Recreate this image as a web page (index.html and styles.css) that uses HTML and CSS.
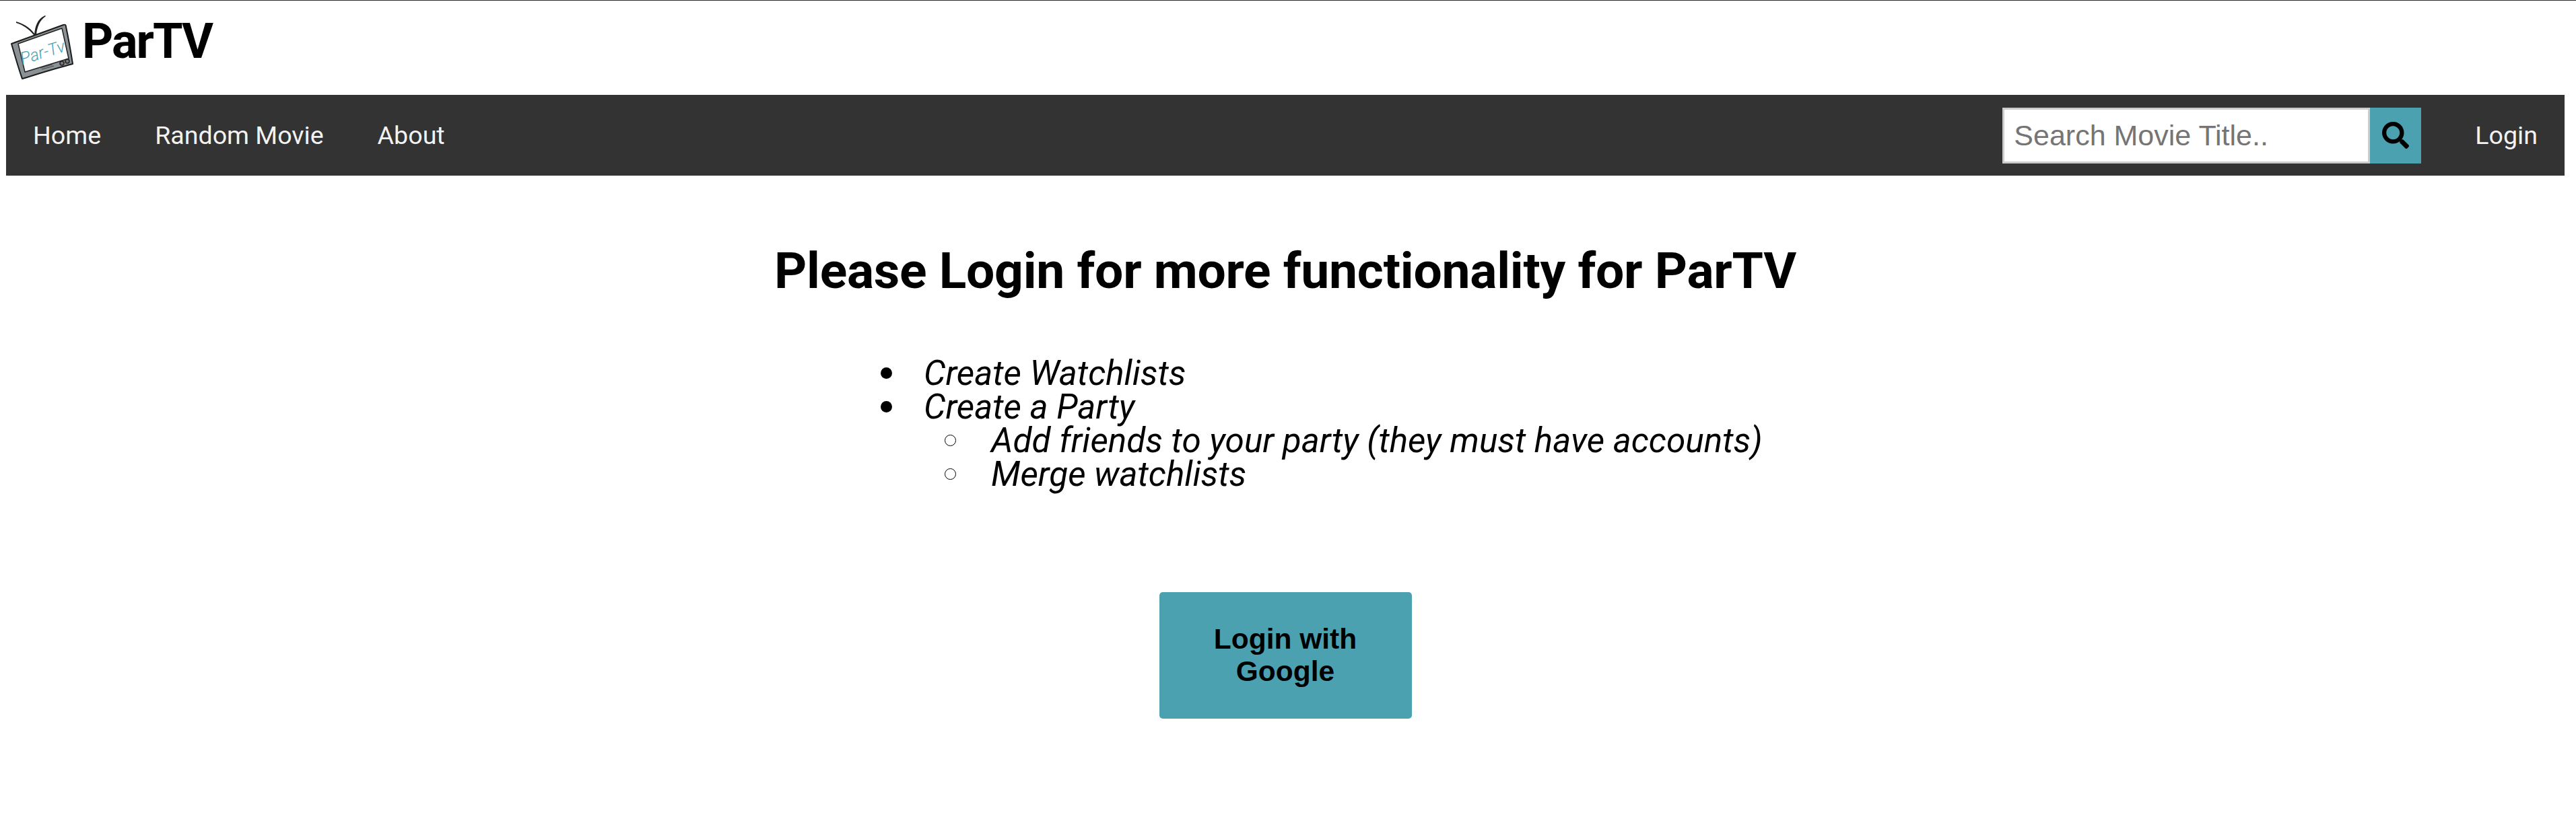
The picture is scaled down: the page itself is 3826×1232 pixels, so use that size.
FILE: index.html
```html
<!DOCTYPE html>
<html lang="en">
<head>
    <meta charset="UTF-8">
    <meta name="viewport" content="width=device-width, initial-scale=1.0">
    <title>ParTV</title>
    <link rel="stylesheet" href="styles.css">
</head>
<body>
    <header class="brand">
        <svg class="brand-logo" viewBox="0 0 100 100" aria-hidden="true">
            <path d="M10 12 C20 15 30 20 38 31 L36 32 C29 23 20 17 10 14 Z" fill="#222"/>
            <path d="M37 32 C38 20 41 8 53 3 L54 4 C45 10 41 20 40 32 Z" fill="#222"/>
            <path d="M3 45 C28 36 55 26 80 17 C83 16 84 17 84 20 C88 38 91 56 94 75 C70 81 42 90 19 97 C13 80 8 62 3 45 Z" fill="#8b9296" stroke="#1c1c1c" stroke-width="2" stroke-linejoin="round"/>
            <path d="M13 45 L78 22 L88 67 L23 87 Z" fill="#fff" stroke="#222" stroke-width="1.500" stroke-linejoin="round"/>
            <text class="logo-text" x="19" y="76" transform="rotate(-17 19 76)">Par-Tv</text>
            <circle cx="78" cy="74" r="3" fill="#777" stroke="#222" stroke-width="1.500"/>
            <circle cx="86" cy="71" r="3" fill="#777" stroke="#222" stroke-width="1.500"/>
            <path d="M46 81 L64 76 M48 83 L66 78" stroke="#444" stroke-width="1"/>
        </svg>
        <h1 class="brand-name">ParTV</h1>
    </header>

    <nav class="topnav">
        <a href="#">Home</a>
        <a href="#">Random Movie</a>
        <a href="#">About</a>
        <form class="search">
            <input type="text" placeholder="Search Movie Title..">
            <button type="button" aria-label="Search">
                <svg viewBox="0 0 512 512" aria-hidden="true">
                    <path d="M505 442.700L405.300 343c-4.500-4.500-10.600-7-17-7H372c27.600-35.300 44-79.700 44-128C416 93.100 322.900 0 208 0S0 93.100 0 208s93.100 208 208 208c48.300 0 92.700-16.400 128-44v16.300c0 6.400 2.500 12.500 7 17l99.700 99.700c9.400 9.400 24.600 9.400 33.900 0l28.300-28.300c9.400-9.400 9.400-24.600.1-34zM208 336c-70.700 0-128-57.200-128-128 0-70.700 57.200-128 128-128 70.700 0 128 57.200 128 128 0 70.700-57.200 128-128 128z"/>
                </svg>
            </button>
        </form>
        <a href="#">Login</a>
    </nav>

    <main class="content">
        <h2>Please Login for more functionality for ParTV</h2>
        <ul class="features">
            <li>Create Watchlists</li>
            <li>Create a Party
                <ul>
                    <li>Add friends to your party (they must have accounts)</li>
                    <li>Merge watchlists</li>
                </ul>
            </li>
        </ul>
        <button class="google-btn" type="button">Login with Google</button>
    </main>
</body>
</html>
```

FILE: styles.css
```css
html {
    border-top: 1px solid #2b2b2b;
}
body {
    font-family: Roboto, sans-serif;
    margin: 0;
    padding: 0 17px 0 9px;
    color: #000;
    background: #fff;
}
.brand {
    display: flex;
    align-items: flex-start;
    height: 140px;
    padding: 19px 0 0 5px;
    box-sizing: border-box;
}
.brand-logo {
    width: 100px;
    height: 100px;
}
.logo-text {
    font-family: Roboto, sans-serif;
    font-style: italic;
    font-weight: 300;
    font-size: 25px;
    fill: #4ba3b2;
}
.brand-name {
    font-size: 72px;
    font-weight: 700;
    letter-spacing: -2px;
    line-height: 84px;
    margin: 0 0 0 8px;
}
.topnav {
    display: flex;
    align-items: center;
    height: 120px;
    background-color: #333;
}
.topnav a {
    color: #f2f2f2;
    font-size: 37.600px;
    padding: 0 40px;
    text-decoration: none;
}
.search {
    display: flex;
    margin-left: auto;
    margin-right: 40px;
}
.search input {
    width: 546px;
    height: 83px;
    padding: 0 14px;
    font-family: "Liberation Sans", sans-serif;
    font-size: 43px;
    border: 3px solid #ccc;
    border-radius: 0;
    box-sizing: border-box;
}
.search button {
    width: 76px;
    height: 83px;
    padding: 0;
    border: none;
    background-color: #4ba1af;
    display: flex;
    align-items: center;
    justify-content: center;
}
.search svg {
    width: 40px;
    height: 40px;
}
.content {
    display: flow-root;
    text-align: center;
}
.content h2 {
    font-size: 75px;
    font-weight: 700;
    letter-spacing: -0.250px;
    margin: 97px 0 0;
}
.features {
    list-style: none;
    text-align: left;
    font-size: 51.300px;
    font-style: italic;
    font-weight: 400;
    line-height: 50px;
    margin: 84px 0 0 1261px;
    padding-left: 102px;
}
.features li {
    position: relative;
}
.features > li::before {
    content: "";
    position: absolute;
    left: -64px;
    top: 16px;
    width: 17px;
    height: 17px;
    border-radius: 50%;
    background: #000;
}
.features ul {
    list-style: none;
    padding-left: 100px;
}
.features ul > li::before {
    content: "";
    position: absolute;
    left: -69px;
    top: 16px;
    width: 17px;
    height: 17px;
    box-sizing: border-box;
    border: 1px solid #000;
    border-radius: 50%;
}
.google-btn {
    display: block;
    width: 375px;
    height: 188px;
    margin: 150px auto 0;
    padding: 0 40px;
    font-family: "Liberation Sans", sans-serif;
    font-size: 42.500px;
    font-weight: 700;
    line-height: 48px;
    color: #000;
    background-color: #4ba1af;
    border: none;
    border-radius: 5px;
}
```
